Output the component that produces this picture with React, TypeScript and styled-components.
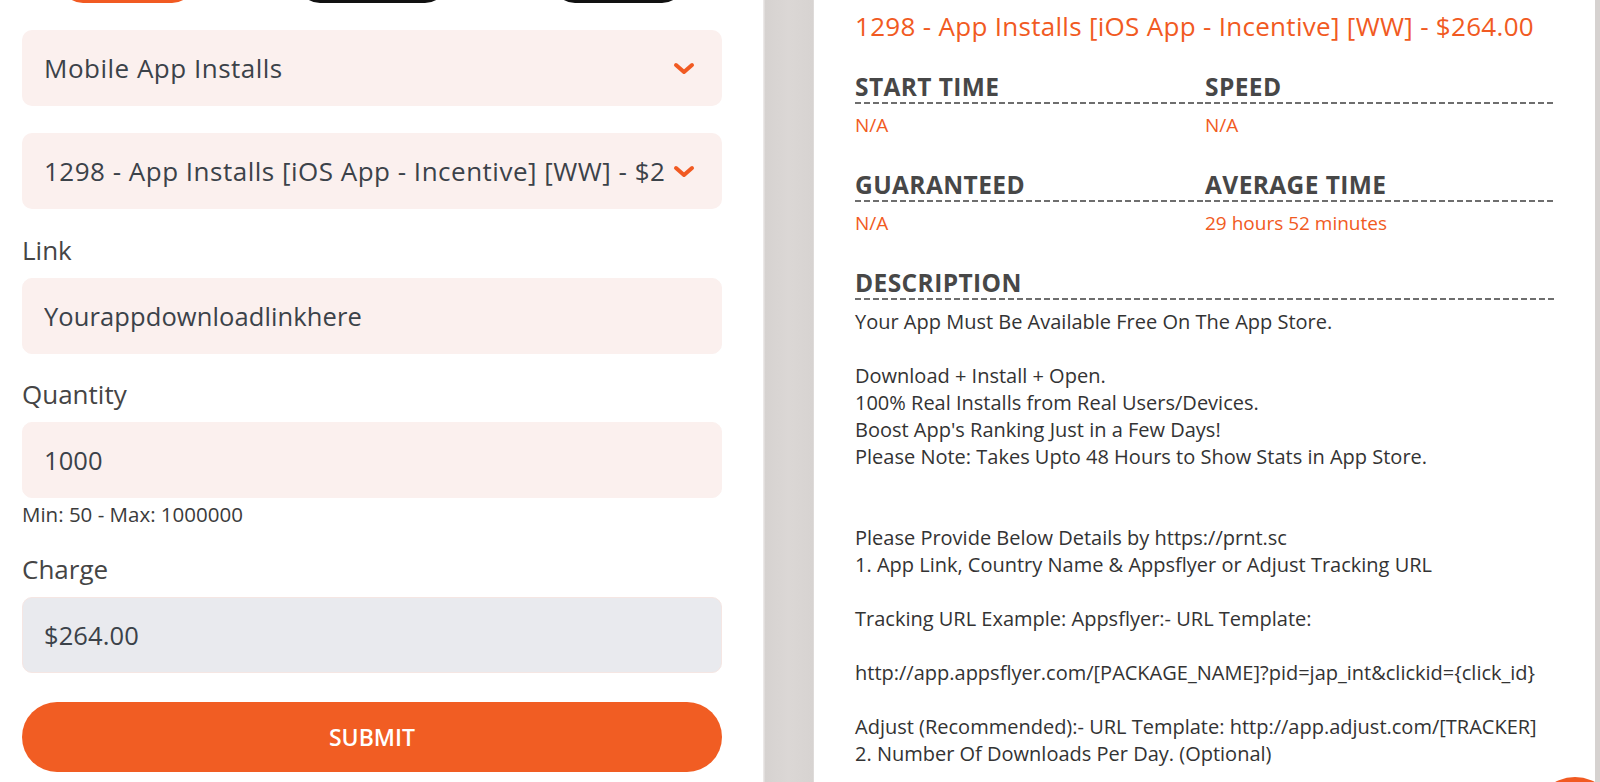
import React from "react";
import styled, { createGlobalStyle } from "styled-components";

const GlobalStyle = createGlobalStyle`
  html, body {
    margin: 0;
    padding: 0;
    background: #ffffff;
    overflow: hidden;
  }
  * { box-sizing: border-box; }
`;

const ORANGE = "#f15a22";
const FONT = `"Open Sans", "Lato", "Liberation Sans", sans-serif`;

const Page = styled.div`
  display: flex;
  height: 782px;
  overflow: hidden;
  font-family: ${FONT};
  position: relative;
`;

const LeftPanel = styled.div`
  width: 763px;
  flex-shrink: 0;
  padding: 0 41px 0 22px;
  display: flex;
  flex-direction: column;
  background: #ffffff;
`;

const TabRow = styled.div`
  display: flex;
  height: 44px;
  margin-top: -41px;
`;

const Tab = styled.div<{ $w: number; $ml: number; $active?: boolean }>`
  width: ${(p) => p.$w}px;
  margin-left: ${(p) => p.$ml}px;
  height: 44px;
  border-radius: 22px;
  background: ${(p) => (p.$active ? ORANGE : "#ffffff")};
  border: 3px solid ${(p) => (p.$active ? ORANGE : "#111111")};
`;

const SelectBox = styled.div`
  height: 76px;
  margin-top: 27px;
  border-radius: 10px;
  background: #fbf0ee;
  display: flex;
  align-items: center;
  padding: 0 27px 0 22px;
  gap: 8px;
`;

const SelectText = styled.span`
  flex: 1;
  min-width: 0;
  white-space: nowrap;
  overflow: hidden;
  font-size: 26px;
  letter-spacing: 0.5px;
  color: #3b4249;
`;

const Chevron = styled.svg`
  flex-shrink: 0;
  width: 22px;
  height: 13px;
`;

const Group = styled.div<{ $mt: number }>`
  margin-top: ${(p) => p.$mt}px;
  display: flex;
  flex-direction: column;
`;

const Label = styled.label`
  font-size: 26px;
  line-height: 30px;
  color: #454545;
  margin-bottom: 13px;
`;

const Field = styled.input<{ $disabled?: boolean }>`
  height: 76px;
  border-radius: 10px;
  border: 1px solid ${(p) => (p.$disabled ? "#f5e6e3" : "#fbf0ee")};
  background: ${(p) => (p.$disabled ? "#e9eaee" : "#fbf0ee")};
  padding: 0 21px;
  font-family: ${FONT};
  font-size: 25.5px;
  letter-spacing: 0.1px;
  color: #3b4249;
  outline: none;
`;

const Hint = styled.div`
  font-size: 20.5px;
  line-height: 24px;
  color: #3b3b3b;
  margin-top: 4px;
`;

const SubmitButton = styled.button`
  margin-top: 29px;
  height: 70px;
  border: none;
  border-radius: 35px;
  background: #f15d23;
  color: #ffffff;
  font-family: ${FONT};
  font-size: 23px;
  font-weight: 600;
`;

const Divider = styled.div`
  width: 51px;
  flex-shrink: 0;
  background: linear-gradient(
    to right,
    #ebe8e7 0,
    #ebe8e7 1px,
    #d6d2d0 2px,
    #dbd7d5 50%,
    #d7d3d1 calc(100% - 1px),
    #e6e3e2 100%
  );
`;

const RightPanel = styled.div`
  flex: 1;
  padding: 11px 40px 0 41px;
  border-right: 5px solid #d6d2d0;
  background: #ffffff;
  display: flex;
  flex-direction: column;
`;

const Title = styled.h2`
  margin: 0;
  font-size: 26px;
  line-height: 30px;
  letter-spacing: 0.3px;
  font-weight: 400;
  color: ${ORANGE};
`;

const InfoGrid = styled.div`
  display: grid;
  grid-template-columns: 1fr 1fr;
  row-gap: 36px;
  margin-top: 32px;
`;

const Cell = styled.div<{ $span?: boolean }>`
  grid-column: ${(p) => (p.$span ? "1 / -1" : "auto")};
  display: flex;
  flex-direction: column;
`;

const Heading = styled.h3`
  margin: 0;
  font-size: 24.5px;
  line-height: 28px;
  letter-spacing: 0.4px;
  font-weight: 700;
  color: #474747;
  padding-bottom: 3px;
  background-image: linear-gradient(to right, #6e6e6e 66%, transparent 0);
  background-size: 9px 2px;
  background-repeat: repeat-x;
  background-position: left bottom;
`;

const Value = styled.div`
  margin-top: 11px;
  font-size: 19px;
  line-height: 20px;
  color: ${ORANGE};
`;

const Description = styled.div`
  margin-top: 8px;
  font-size: 20px;
  line-height: 27px;
  color: #333333;
  white-space: pre-line;
`;

const ChatBubble = styled.div`
  position: absolute;
  left: 1533px;
  top: 777px;
  width: 84px;
  height: 84px;
  border-radius: 50%;
  background: ${ORANGE};
`;

const ChevronIcon = () => (
  <Chevron viewBox="0 0 22 13">
    <polyline
      points="3,3 11,10 19,3"
      fill="none"
      stroke={ORANGE}
      strokeWidth="4"
      strokeLinecap="round"
      strokeLinejoin="round"
    />
  </Chevron>
);

const descriptionText = `Your App Must Be Available Free On The App Store.

Download + Install + Open.
100% Real Installs from Real Users/Devices.
Boost App's Ranking Just in a Few Days!
Please Note: Takes Upto 48 Hours to Show Stats in App Store.


Please Provide Below Details by https://prnt.sc
1. App Link, Country Name & Appsflyer or Adjust Tracking URL

Tracking URL Example: Appsflyer:- URL Template:

http://app.appsflyer.com/[PACKAGE_NAME]?pid=jap_int&clickid={click_id}

Adjust (Recommended):- URL Template: http://app.adjust.com/[TRACKER]
2. Number Of Downloads Per Day. (Optional)`;

export default function App() {
  return (
    <>
      <GlobalStyle />
      <Page>
        <LeftPanel>
          <TabRow>
            <Tab $w={133} $ml={39} $active />
            <Tab $w={149} $ml={104} />
            <Tab $w={131} $ml={106} />
          </TabRow>

          <SelectBox>
            <SelectText>Mobile App Installs</SelectText>
            <ChevronIcon />
          </SelectBox>
          <SelectBox>
            <SelectText>1298 - App Installs [iOS App - Incentive] [WW] - $264.00</SelectText>
            <ChevronIcon />
          </SelectBox>

          <Group $mt={26}>
            <Label>Link</Label>
            <Field readOnly defaultValue="Yourappdownloadlinkhere" />
          </Group>

          <Group $mt={25}>
            <Label>Quantity</Label>
            <Field readOnly defaultValue="1000" />
            <Hint>Min: 50 - Max: 1000000</Hint>
          </Group>

          <Group $mt={28}>
            <Label>Charge</Label>
            <Field readOnly $disabled defaultValue="$264.00" />
          </Group>

          <SubmitButton>SUBMIT</SubmitButton>
        </LeftPanel>

        <Divider />

        <RightPanel>
          <Title>1298 - App Installs [iOS App - Incentive] [WW] - $264.00</Title>
          <InfoGrid>
            <Cell>
              <Heading>START TIME</Heading>
              <Value>N/A</Value>
            </Cell>
            <Cell>
              <Heading>SPEED</Heading>
              <Value>N/A</Value>
            </Cell>
            <Cell>
              <Heading>GUARANTEED</Heading>
              <Value>N/A</Value>
            </Cell>
            <Cell>
              <Heading>AVERAGE TIME</Heading>
              <Value>29 hours 52 minutes</Value>
            </Cell>
            <Cell $span>
              <Heading>DESCRIPTION</Heading>
              <Description>{descriptionText}</Description>
            </Cell>
          </InfoGrid>
        </RightPanel>

        <ChatBubble />
      </Page>
    </>
  );
}
